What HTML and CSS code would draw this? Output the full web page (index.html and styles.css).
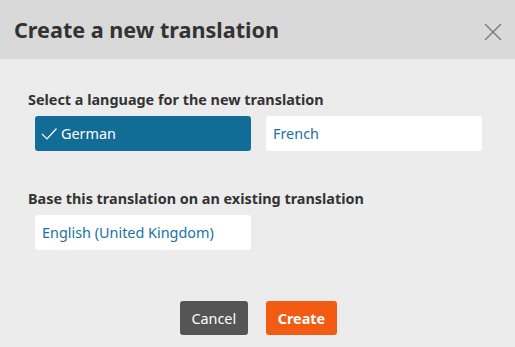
FILE: index.html
```html
<!DOCTYPE html>
<html>
<head>
<meta charset="utf-8">
<link rel="stylesheet" href="styles.css">
</head>
<body>
<div class="dialog">
  <div class="header">
    <h1 class="title">Create a new translation</h1>
    <button class="close" aria-label="Close">
      <svg width="18" height="18" viewBox="0 0 18 18"><path d="M1 1L17 17M17 1L1 17" stroke="#7d7d7d" stroke-width="1.5" fill="none"/></svg>
    </button>
  </div>
  <div class="content">
    <div class="section">
      <div class="label">Select a language for the new translation</div>
      <div class="options">
        <button class="option selected">
          <svg class="check" width="16" height="12" viewBox="0 0 16 12"><path d="M1 6L6 11L15.5 0.5" stroke="#fff" stroke-width="1.2" fill="none"/></svg>
          German
        </button>
        <button class="option">French</button>
      </div>
    </div>
    <div class="section second">
      <div class="label">Base this translation on an existing translation</div>
      <div class="options">
        <button class="option">English (United Kingdom)</button>
      </div>
    </div>
  </div>
  <div class="footer">
    <button class="btn cancel">Cancel</button>
    <button class="btn create">Create</button>
  </div>
</div>
</body>
</html>
```
FILE: styles.css
```css
html, body {
  margin: 0;
  padding: 0;
  background: #ececec;
  font-family: "Noto Sans", "Open Sans", sans-serif;
}
.dialog {
  width: 515px;
  height: 347px;
  display: flex;
  flex-direction: column;
}
.header {
  height: 59px;
  background: #d9d9d9;
  display: flex;
  align-items: center;
  justify-content: space-between;
  padding: 0 13px 0 14px;
}
.title {
  margin: 0;
  font-size: 21.6px;
  font-weight: 700;
  color: #333;
}
.close {
  border: 0;
  background: none;
  padding: 0;
  width: 18px;
  height: 18px;
  margin-top: 4px;
}
.content {
  padding: 31px 28px 0 28px;
}
.label {
  font-size: 14.4px;
  font-weight: 700;
  color: #333;
  line-height: 19px;
}
.options {
  display: flex;
  gap: 15px;
  padding-left: 7px;
  margin-top: 7px;
}
.option {
  width: 216px;
  height: 35px;
  border: 0;
  border-radius: 3px;
  background: #fff;
  color: #1a72a4;
  font-family: inherit;
  font-size: 14.4px;
  text-align: left;
  padding: 0 7px;
  display: flex;
  align-items: center;
}
.option.selected {
  background: #116d96;
  color: #fff;
  padding-left: 6px;
}
.check {
  margin-right: 4px;
}
.second {
  margin-top: 38px;
}
.footer {
  display: flex;
  justify-content: center;
  gap: 18px;
  margin-top: 51px;
  padding-left: 2px;
}
.btn {
  height: 34px;
  border: 0;
  border-radius: 3px;
  font-family: inherit;
  font-size: 14.4px;
  color: #fff;
  padding: 0 12px;
}
.cancel {
  background: #555;
  padding: 0 11.5px;
}
.create {
  background: #f35b13;
  font-weight: 700;
}
```
